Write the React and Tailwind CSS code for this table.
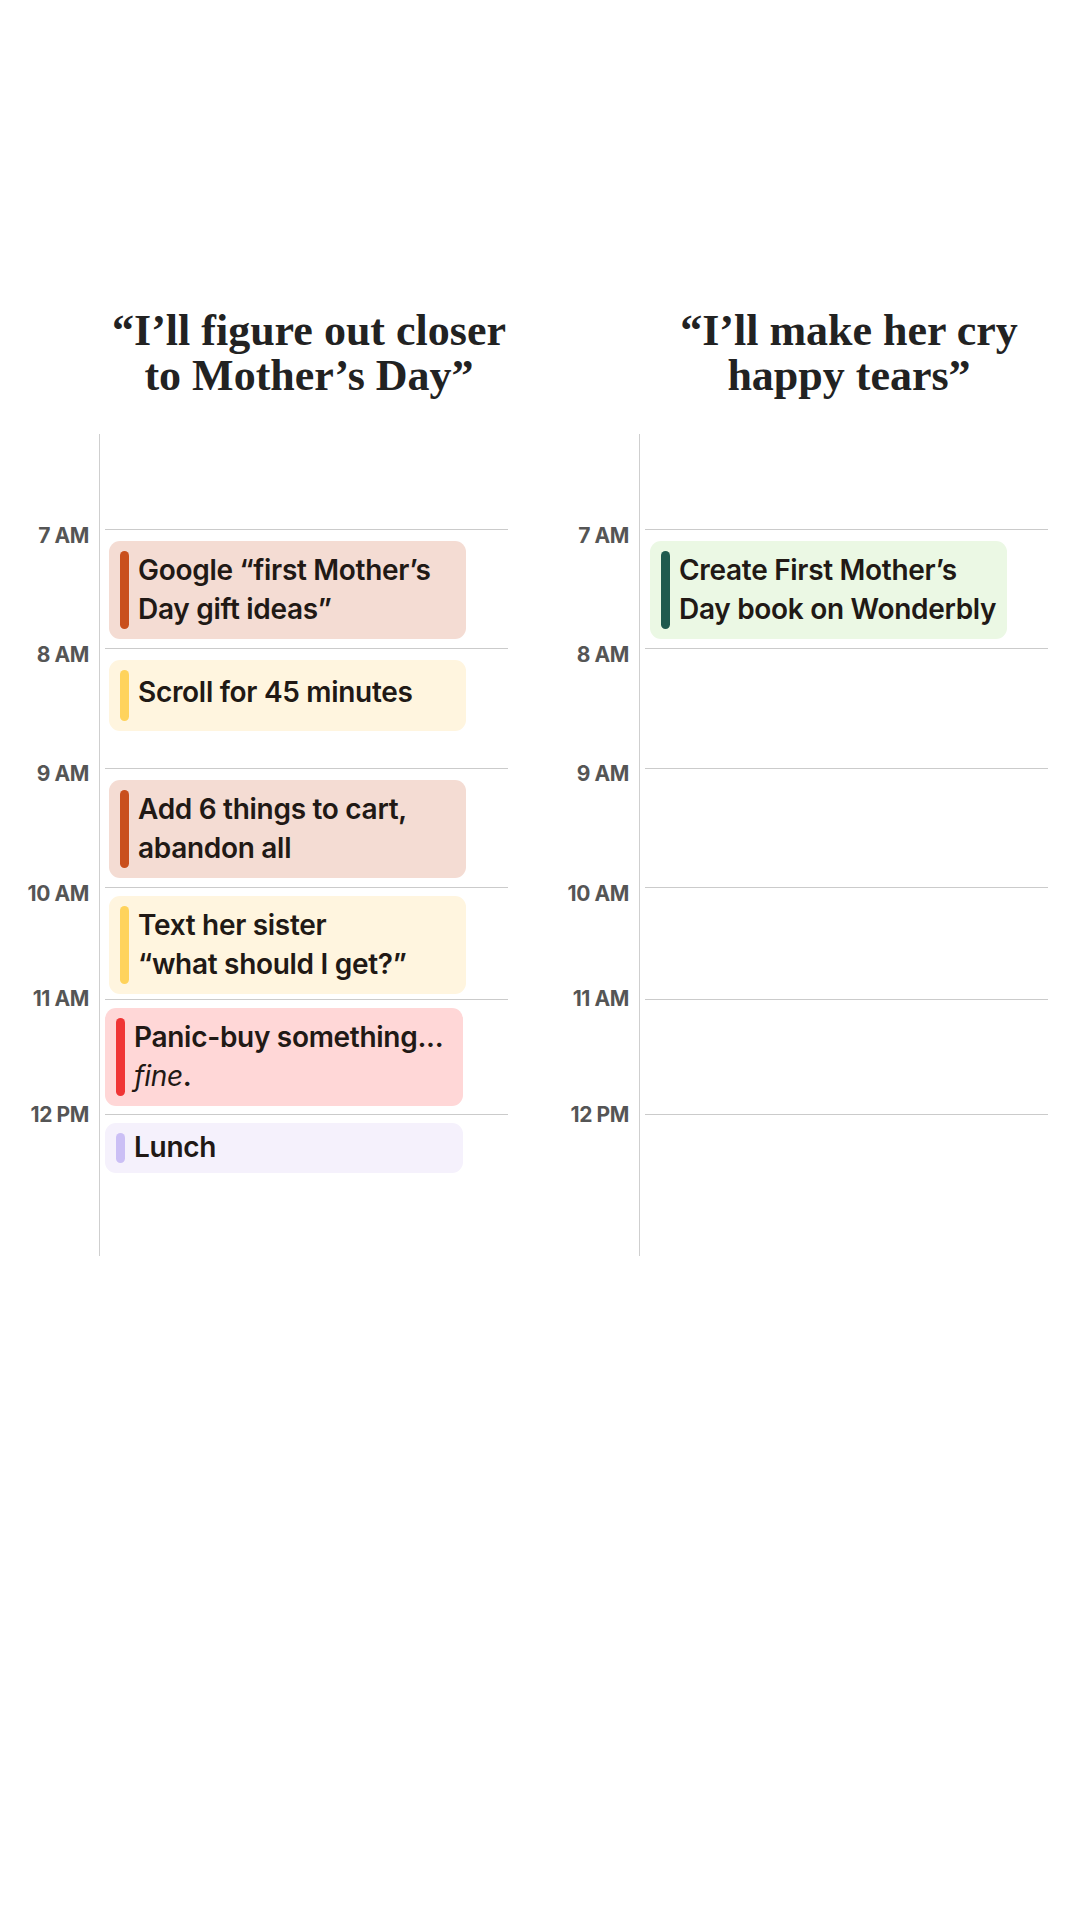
const hours = [
  { label: '7 AM', h: 'h-[119px]', lbl: '-mt-[5px]' },
  { label: '8 AM', h: 'h-[120px]', lbl: '-mt-[5px]' },
  { label: '9 AM', h: 'h-[119px]', lbl: '-mt-[6px]' },
  { label: '10 AM', h: 'h-[112px]', lbl: '-mt-[5px]' },
  { label: '11 AM', h: 'h-[115px]', lbl: '-mt-[12px]' },
  { label: '12 PM', h: 'h-[142px]', lbl: '-mt-[11px]' },
]

const leftEvents = {
  '7 AM': {
    lines: ['Google “first Mother’s', 'Day gift ideas”'],
    box: 'bg-[#f4dcd3] h-[98px] mt-[11px] ml-[9px] w-[357px] pl-[11px]',
    bar: 'bg-[#c9501d]',
  },
  '8 AM': {
    lines: ['Scroll for 45 minutes'],
    box: 'bg-[#fff5df] h-[71px] mt-[11px] ml-[9px] w-[357px] pl-[11px]',
    bar: 'bg-[#ffd35c]',
    text: 'pb-[6px]',
  },
  '9 AM': {
    lines: ['Add 6 things to cart,', 'abandon all'],
    box: 'bg-[#f4dcd3] h-[98px] mt-[11px] ml-[9px] w-[357px] pl-[11px]',
    bar: 'bg-[#c9501d]',
  },
  '10 AM': {
    lines: ['Text her sister', '“what should I get?”'],
    box: 'bg-[#fff5df] h-[98px] mt-[8px] ml-[9px] w-[357px] pl-[11px]',
    bar: 'bg-[#ffd35c]',
  },
  '11 AM': {
    lines: ['Panic-buy something...', <><em className="font-normal">fine</em>.</>],
    box: 'bg-[#ffd7d7] h-[98px] mt-[8px] ml-[5px] w-[358px] pl-[11px]',
    bar: 'bg-[#f03535]',
  },
  '12 PM': {
    lines: ['Lunch'],
    box: 'bg-[#f5f1fc] h-[50px] mt-[8px] ml-[5px] w-[358px] pl-[11px]',
    bar: 'bg-[#cbbff5]',
    text: 'pb-[2px]',
  },
}

const rightEvents = {
  '7 AM': {
    lines: ['Create First Mother’s', 'Day book on Wonderbly'],
    box: 'bg-[#ebf8e4] h-[98px] mt-[11px] ml-[10px] w-[357px] pl-[11px]',
    bar: 'bg-[#1f5a4e]',
  },
}

function Event({ ev }) {
  return (
    <div className={`flex gap-[9px] rounded-[11px] py-[10px] ${ev.box}`}>
      <div className={`w-[9px] shrink-0 rounded-full ${ev.bar}`} />
      <div className={`flex flex-col justify-center text-[28px] leading-[39px] font-semibold text-[#211915] tracking-[-0.3px] ${ev.text || ''}`}>
        {ev.lines.map((l, i) => (
          <div key={i}>{l}</div>
        ))}
      </div>
    </div>
  )
}

function Column({ title, events }) {
  return (
    <div className="w-[540px] shrink-0">
      <h2
        className="pl-[78px] pt-[308px] text-center text-[44px] leading-[45px] font-bold text-[#222]"
        style={{ fontFamily: '"Liberation Serif", serif' }}
      >
        {title.map((t, i) => (
          <div key={i}>{t}</div>
        ))}
      </h2>

      {/* Timeline */}
      <div className="mt-[36px] flex flex-col">
        <div className="flex h-[95px]">
          <div className="w-[99px] shrink-0" />
          <div className="flex-1 border-l border-[#cfcfcf]" />
        </div>
        {hours.map((hr) => (
          <div key={hr.label} className={`flex ${hr.h}`}>
            <div className="w-[99px] shrink-0 pr-[10px] text-right">
              <div className={`${hr.lbl} text-[21px] leading-[24px] font-bold text-[#555] tracking-[-0.4px]`}>
                {hr.label}
              </div>
            </div>
            <div className="flex-1 border-l border-[#cfcfcf]">
              <div className="ml-[5px] w-[403px] border-t border-[#cbcbcb]" />
              {events[hr.label] && <Event ev={events[hr.label]} />}
            </div>
          </div>
        ))}
      </div>
    </div>
  )
}

export default function App() {
  return (
    <div
      className="w-[1080px] h-[1920px] bg-white flex overflow-hidden"
      style={{ fontFamily: 'Inter, "Noto Sans", sans-serif' }}
    >
      <Column title={['“I’ll figure out closer', 'to Mother’s Day”']} events={leftEvents} />
      <Column title={['“I’ll make her cry', 'happy tears”']} events={rightEvents} />
    </div>
  )
}
